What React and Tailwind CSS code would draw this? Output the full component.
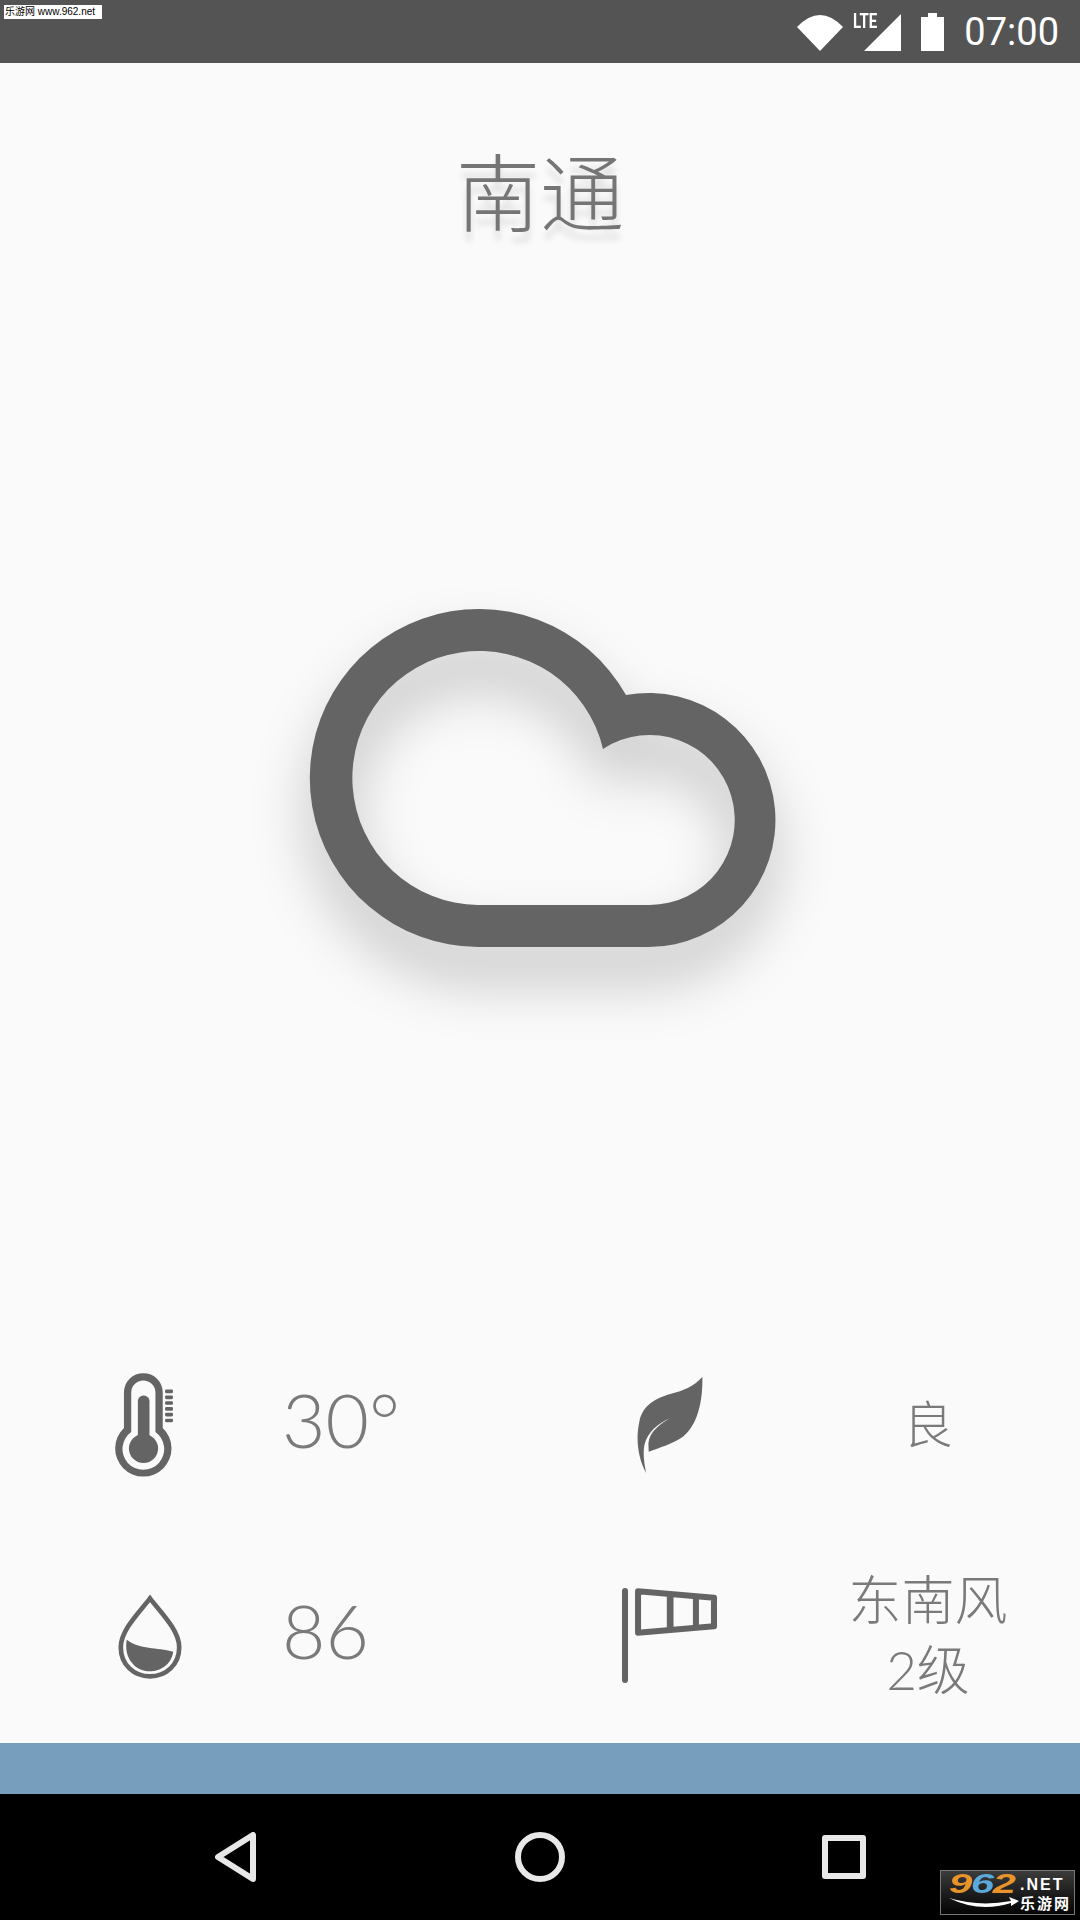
const cjk = "font-['Lato','Noto_Sans_CJK_SC',sans-serif]"

function StatusIcons() {
  return (
    <svg width="105" height="38" viewBox="797 13 105 38" className="fill-white">
      <path d="M820 51 L797 27 Q820 3 843 27 Z" />
      <path d="M901 14 V51 H864 Z" />
    </svg>
  )
}

function Battery() {
  return (
    <svg width="23" height="38" viewBox="0 0 23 38" className="fill-white">
      <path d="M7 0 H16 V4 H23 V38 H0 V4 H7 Z" />
    </svg>
  )
}

function CloudIcon() {
  return (
    <svg
      width="467"
      height="338"
      viewBox="309 609 467 338"
      className="overflow-visible drop-shadow-[0_34px_28px_rgba(0,0,0,0.22)]"
    >
      <path
        fill="#646464"
        fillRule="evenodd"
        d="M478 947 A169 169 0 1 1 626 695 A127 127 0 1 1 649 947 Z M478 905 H649 A85 85 0 1 0 603 749 A127 127 0 1 0 478 905 Z"
      />
    </svg>
  )
}

function Thermometer() {
  return (
    <svg width="58" height="104" viewBox="76 68 175 312" fill="#646464">
      <path
        fillRule="evenodd"
        d="M103 233 V126 A58 58 0 0 1 220 126 V233 A85 85 0 1 1 103 233 Z M125 245 V126 A36.5 36.5 0 0 1 198 126 V245 A63 63 0 1 1 125 245 Z"
      />
      <rect x="145" y="135" width="35" height="140" rx="17" />
      <circle cx="162" cy="295" r="44" />
      {[117, 135, 152, 170, 187, 205].map((y) => (
        <rect key={y} x="227" y={y} width="24" height="11" rx="4" />
      ))}
    </svg>
  )
}

function Leaf() {
  return (
    <svg width="66" height="96" viewBox="108 82 197 286" fill="#646464">
      <path d="M303 82 C280 108 245 124 210 132 C165 145 125 165 115 215 C103 270 112 325 135 368 C130 340 125 315 130 285 C140 245 170 222 205 205 C175 225 145 245 142 280 L143 305 C175 292 215 282 245 260 C290 225 305 150 303 82 Z" />
    </svg>
  )
}

function Drop() {
  return (
    <svg width="64" height="84" viewBox="85 735 190 253">
      <path
        fill="none"
        stroke="#646464"
        strokeWidth="14"
        d="M180 745 C150 785 92 840 92 892 C92 945 132 980 180 980 C228 980 268 945 268 892 C268 840 210 785 180 745 Z"
      />
      <path
        fill="#646464"
        d="M110 870 C150 900 200 892 250 906 C245 945 210 965 180 965 C135 965 100 925 110 870 Z"
      />
    </svg>
  )
}

function Windsock() {
  return (
    <svg width="95" height="95" viewBox="66 716 284 284" fill="#646464">
      <rect x="66" y="716" width="18" height="284" rx="9" />
      <path
        fill="none"
        stroke="#646464"
        strokeWidth="18"
        strokeLinejoin="round"
        d="M114 726 L341 745 V830 L114 850 Z"
      />
      <rect x="200" y="730" width="20" height="110" />
      <rect x="278" y="738" width="18" height="95" />
    </svg>
  )
}

function Stat({ icon, shift, children }) {
  return (
    <>
      <div className={`flex items-center justify-center ${shift}`}>{icon}</div>
      <div className="flex items-center">{children}</div>
    </>
  )
}

function Watermark() {
  return (
    <div className="absolute bottom-[5px] right-[5px] flex h-[45px] w-[135px] border border-[#777] bg-gradient-to-b from-[#3c3c3c] to-[#050505] pl-[8px]">
      <div className="relative w-[71px]">
        <div className="origin-left font-['Liberation_Sans',sans-serif] text-[28px] font-bold italic leading-[26px] tracking-[-1px] text-[#e8932b] [transform:scaleX(1.5)]">
          9<span className="text-[#5aa9dc]">6</span>2
        </div>
        <svg width="70" height="12" viewBox="0 0 70 12" className="fill-white">
          <path d="M0 1 Q30 10 62 4 L60 0 L70 4 L62 9 L62 6 Q30 16 0 1 Z" />
        </svg>
      </div>
      <div className="flex flex-col text-white">
        <span className="pt-[4px] font-['Liberation_Sans',sans-serif] text-[16px] font-bold leading-[20px] tracking-[2px]">.NET</span>
        <span className="font-['Noto_Sans_CJK_SC',sans-serif] text-[15px] font-bold leading-[16px] tracking-[2px]">乐游网</span>
      </div>
    </div>
  )
}

export default function App() {
  return (
    <div className="relative flex h-[1920px] w-[1080px] flex-col overflow-hidden bg-[#fafafa]">
      {/* status bar */}
      <div className="flex h-[63px] items-center bg-[#545454] pl-[4px] pr-[21px]">
        <div className="mt-[5px] h-[14px] w-[98px] self-start whitespace-nowrap bg-white pl-[1px] font-['Liberation_Sans','Noto_Sans_CJK_SC',sans-serif] text-[10px] leading-[14px] text-black">
          乐游网 www.962.net
        </div>
        <div className="relative ml-auto flex items-center">
          <StatusIcons />
          <span className="absolute left-[56px] top-[-2px] origin-left font-['Roboto',sans-serif] text-[20px] font-bold leading-[20px] text-white [transform:scaleX(0.75)]">
            LTE
          </span>
          <div className="ml-[19px]">
            <Battery />
          </div>
          <span className="ml-[20px] font-['Roboto',sans-serif] text-[38px] leading-[38px] text-white">07:00</span>
        </div>
      </div>

      {/* main */}
      <div className="flex flex-1 flex-col items-center">
        <h1 className={`mt-[81px] text-[84px] font-light leading-[98px] text-[#757575] [text-shadow:0_10px_6px_rgba(0,0,0,0.12)] ${cjk}`}>
          南通
        </h1>
        <div className="mr-[-5px] mt-[367px]">
          <CloudIcon />
        </div>

        <div className={`mb-[3px] mt-auto grid w-full grid-cols-[284px_306px_160px_330px] grid-rows-[211px_211px] text-[#7a7a7a] ${cjk}`}>
          <Stat icon={<Thermometer />} shift="ml-[4px] mt-[2px]">
            <span className="mb-[9px] ml-[-2px] text-[75px] font-light leading-none">30°</span>
          </Stat>
          <Stat icon={<Leaf />} shift="mt-[3px]">
            <span className="ml-[28px] w-[300px] text-center text-[50px] font-light leading-none">良</span>
          </Stat>
          <Stat icon={<Drop />} shift="ml-[16px] mt-[4px]">
            <span className="mb-[9px] ml-[-2px] text-[75px] font-light leading-none">86</span>
          </Stat>
          <Stat icon={<Windsock />} shift="mr-[2px] mt-[2px]">
            <span className="ml-[28px] w-[300px] text-center text-[53px] font-light leading-[70px]">
              东南风
              <br />
              2级
            </span>
          </Stat>
        </div>
      </div>

      <div className="h-[51px] bg-[#789ebe]" />

      {/* nav bar */}
      <div className="flex h-[126px] items-center justify-center bg-black">
        <div className="flex w-[304px] justify-center">
          <svg width="42" height="50" viewBox="0 0 42 50" fill="none" stroke="#e8e8e8" strokeWidth="6" strokeLinejoin="round">
            <path d="M38 3 V47 L3 25 Z" />
          </svg>
        </div>
        <div className="flex w-[304px] justify-center">
          <div className="h-[50px] w-[50px] rounded-full border-[6px] border-[#e8e8e8]" />
        </div>
        <div className="flex w-[304px] justify-center">
          <div className="h-[44px] w-[44px] rounded-[3px] border-[6px] border-[#e8e8e8]" />
        </div>
      </div>

      <Watermark />
    </div>
  )
}
